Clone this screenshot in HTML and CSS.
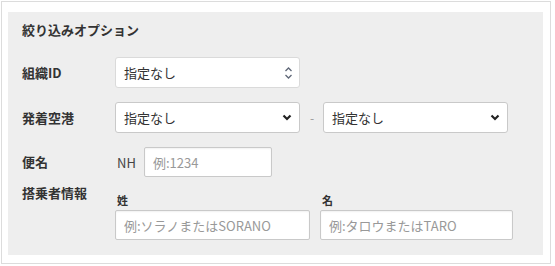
FILE: index.html
```html
<!DOCTYPE html>
<html lang="ja">
<head>
  <meta charset="UTF-8" />
  <meta name="viewport" content="width=device-width, initial-scale=1.0"/>
  <title>絞り込みオプション</title>
  <link rel="stylesheet" href="styles.css">
</head>
<body>

  <div class="frame">
    <div class="panel">
      <h2 class="panel-title">絞り込みオプション</h2>

      <div class="row">
        <div class="row-label">組織ID</div>
        <div class="select select-updown">
          <span>指定なし</span>
          <svg width="9" height="14" viewBox="0 0 9 14">
            <path d="M1.5 5 L4.5 2 L7.5 5" fill="none" stroke="#5f6777" stroke-width="1.3"/>
            <path d="M1.5 9 L4.5 12 L7.5 9" fill="none" stroke="#5f6777" stroke-width="1.3"/>
          </svg>
        </div>
      </div>

      <div class="row">
        <div class="row-label">発着空港</div>
        <div class="select">
          <span>指定なし</span>
          <svg width="10" height="7" viewBox="0 0 10 7">
            <path d="M1.5 1.5 L5 5 L8.5 1.5" fill="none" stroke="#222" stroke-width="2.2"/>
          </svg>
        </div>
        <span class="sep">-</span>
        <div class="select">
          <span>指定なし</span>
          <svg width="10" height="7" viewBox="0 0 10 7">
            <path d="M1.5 1.5 L5 5 L8.5 1.5" fill="none" stroke="#222" stroke-width="2.2"/>
          </svg>
        </div>
      </div>

      <div class="row">
        <div class="row-label">便名</div>
        <span class="prefix">NH</span>
        <input class="field field-flight" type="text" placeholder="例:1234" />
      </div>

      <div class="row row-names">
        <div class="row-label">搭乗者情報</div>
        <div class="name-col">
          <div class="sub-label">姓</div>
          <input class="field field-last" type="text" placeholder="例:ソラノまたはSORANO" />
        </div>
        <div class="name-col">
          <div class="sub-label">名</div>
          <input class="field field-first" type="text" placeholder="例:タロウまたはTARO" />
        </div>
      </div>
    </div>
  </div>

</body>
</html>
```

FILE: styles.css
```css
* {
  margin: 0;
  padding: 0;
  box-sizing: border-box;
  font-family: 'Noto Sans CJK JP', 'Noto Sans', sans-serif;
}

body {
  background: #fff;
  color: #333;
}

.frame {
  margin: 1px;
  width: 550px;
  height: 263px;
  border: 1px solid #dcdcdc;
  padding: 10px 6px 7px 6px;
}

.panel {
  background: #eeeeee;
  width: 535px;
  height: 243px;
  padding: 8px 14px 14px 14px;
}

.panel-title {
  font-size: 13px;
  font-weight: bold;
  line-height: 20px;
  margin-bottom: 17px;
  color: #333;
}

.row {
  display: flex;
  align-items: center;
  margin-bottom: 14px;
}

.row-label {
  width: 93px;
  flex-shrink: 0;
  font-size: 13px;
  font-weight: bold;
  line-height: 16px;
  color: #333;
}

.select {
  width: 185px;
  height: 31px;
  background: #fff;
  border: 1px solid #c9c9c9;
  border-radius: 3px;
  display: flex;
  align-items: center;
  justify-content: space-between;
  padding: 0 7px 0 8px;
  font-size: 13px;
  color: #333;
}

.select-updown {
  border-color: #dadada;
  padding-right: 6px;
}

.sep {
  width: 3px;
  margin: 0 10px;
  font-size: 12px;
  color: #999;
}

.prefix {
  margin-left: 2px;
  margin-right: 8px;
  font-size: 13px;
  color: #444;
}

.field {
  height: 30px;
  background: #fff;
  border: 1px solid #c9c9c9;
  border-radius: 2px;
  box-shadow: inset 0 1px 2px rgba(0, 0, 0, 0.06);
  padding: 0 8px;
  font-size: 13px;
  color: #333;
  outline: none;
}

.field::placeholder {
  color: #999;
}

.field-flight { width: 128px; }
.field-last { width: 195px; }
.field-first { width: 193px; }

.row-names {
  align-items: flex-start;
  margin-top: -8px;
  margin-bottom: 0;
}

.row-names .row-label {
  line-height: 20px;
}

.name-col {
  padding-top: 9px;
  margin-right: 10px;
}

.sub-label {
  font-size: 11px;
  font-weight: bold;
  line-height: 16px;
  margin-bottom: 2px;
  padding-left: 2px;
  color: #333;
}
```
